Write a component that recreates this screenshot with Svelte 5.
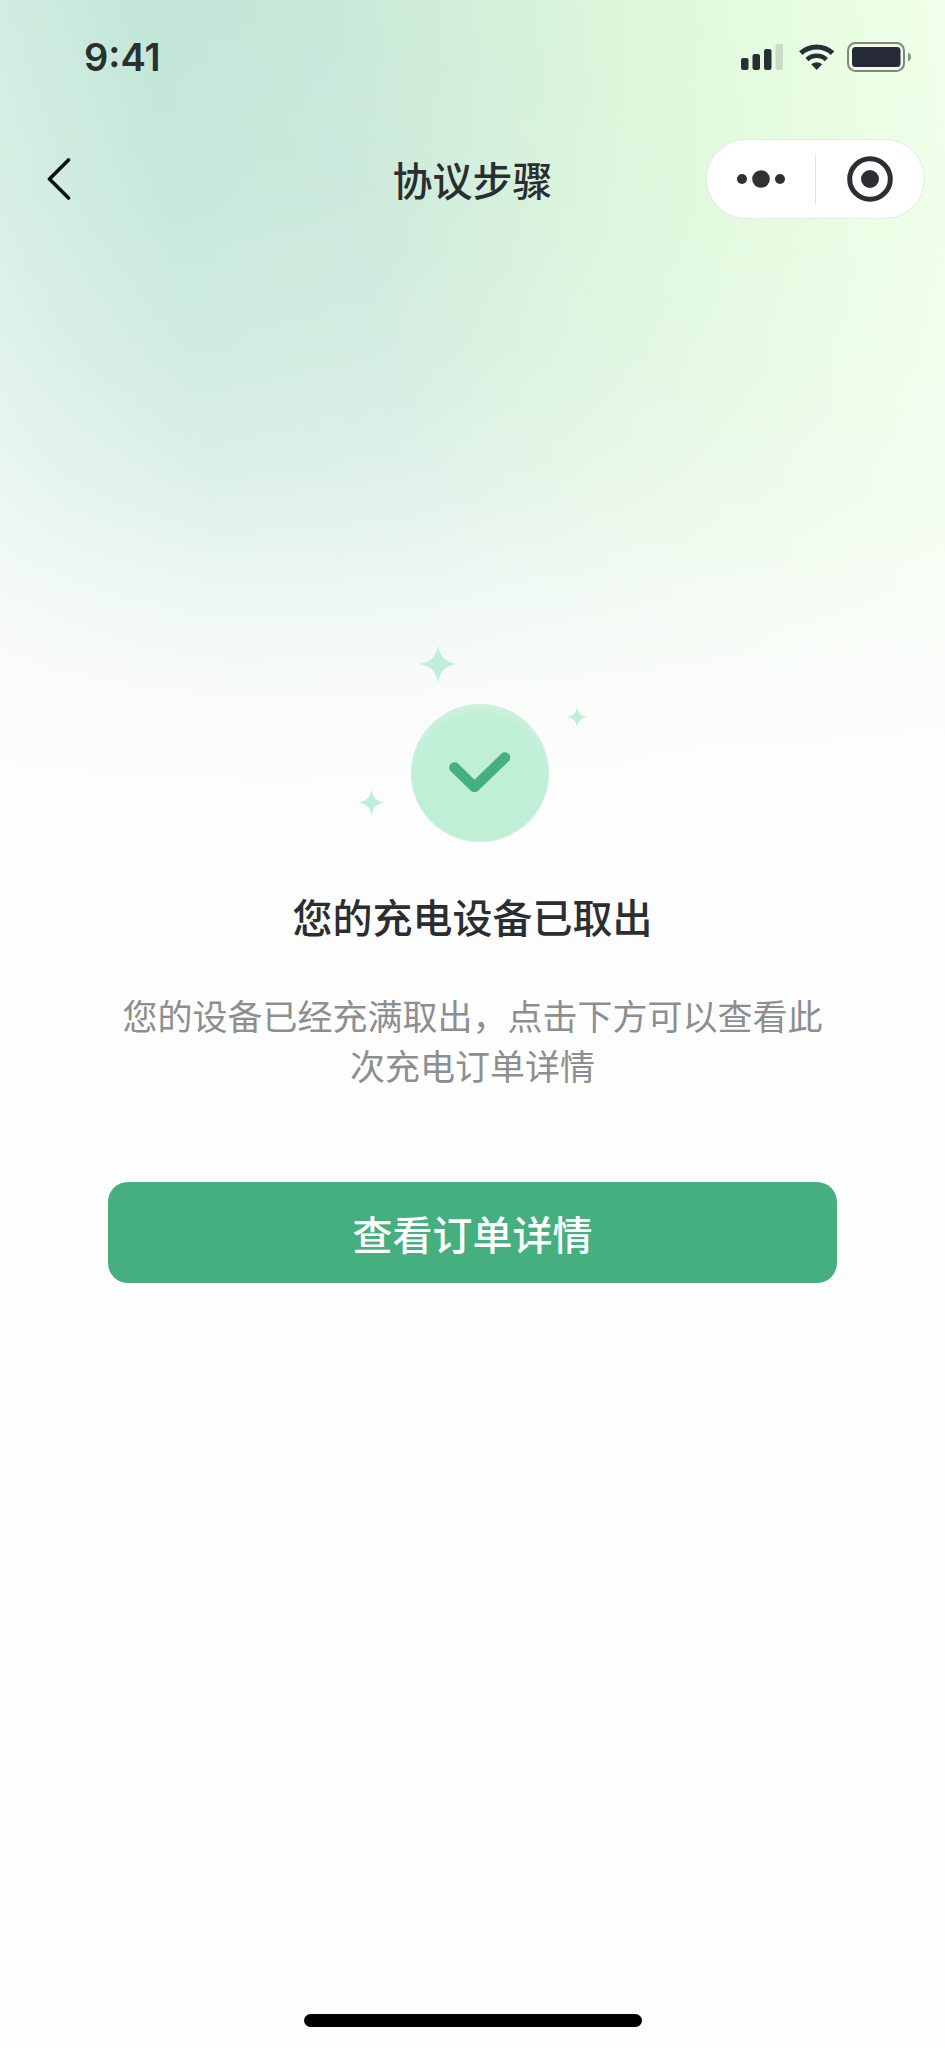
<!--
  @component ChargeComplete
  @description Result screen shown once a device has been taken out of the
    charging locker. Links on to the order details.
-->
<script>
  let {
    title = '协议步骤',
    heading = '您的充电设备已取出',
    message = '您的设备已经充满取出，点击下方可以查看此次充电订单详情',
    action = '查看订单详情',
    time = '9:41',
    onBack,
    onMenu,
    onClose,
    onViewOrder,
  } = $props();

  // Signal strength bars, shortest first; the last one is inactive
  const bars = [
    { x: 0, height: 12 },
    { x: 11.5, height: 16 },
    { x: 23, height: 21 },
    { x: 34.5, height: 26, off: true },
  ];
</script>

<div class="page">
  <div class="status-bar">
    <span class="time">{time}</span>
    <div class="status-icons" aria-hidden="true">
      <svg width="42" height="26" viewBox="0 0 42 26">
        {#each bars as bar}
          <rect
            x={bar.x}
            y={26 - bar.height}
            width="7.5"
            height={bar.height}
            rx="2.2"
            fill={bar.off ? '#c9dcc6' : '#272f35'}
          />
        {/each}
      </svg>
      <svg width="40" height="26" viewBox="0 0 40 26" fill="none" stroke="#272f35">
        <path d="M5.8 9.1a23.5 23.5 0 0 1 31.8 0" stroke-width="5" />
        <path d="M12 15.6a14.3 14.3 0 0 1 19.4 0" stroke-width="4.6" />
        <path d="M16.2 20.2a8.6 8.6 0 0 1 11 0L21.7 26z" fill="#272f35" stroke="none" />
      </svg>
      <svg width="64" height="30" viewBox="0 0 64 30">
        <rect x="1" y="1" width="56" height="28" rx="7.5" fill="#f0fbea" stroke="#7d8a7b" stroke-width="2" />
        <rect x="5" y="5" width="48.5" height="20" rx="3.5" fill="#272b37" />
        <path d="M61 10.5c2 .8 3 2.4 3 4.5s-1 3.7-3 4.5z" fill="#8a9787" />
      </svg>
    </div>
  </div>

  <header class="nav">
    <button class="back" type="button" aria-label="返回" onclick={() => onBack?.()}>
      <svg width="24" height="44" viewBox="0 0 24 44" fill="none" stroke="#0b1411" stroke-width="3.6" stroke-linecap="round" stroke-linejoin="round">
        <path d="M21.5 3L2.5 22l19 19" />
      </svg>
    </button>
    <h1 class="title">{title}</h1>
    <div class="capsule">
      <button type="button" aria-label="更多" onclick={() => onMenu?.()}>
        <svg width="48" height="18" viewBox="0 0 48 18" fill="#2f3133">
          <circle cx="5" cy="9" r="5" />
          <circle cx="24" cy="9" r="8.8" />
          <circle cx="43" cy="9" r="5" />
        </svg>
      </button>
      <span class="divider"></span>
      <button type="button" aria-label="关闭" onclick={() => onClose?.()}>
        <svg width="46" height="46" viewBox="0 0 46 46">
          <circle cx="23" cy="23" r="20.3" fill="none" stroke="#2c2e33" stroke-width="5" />
          <circle cx="23" cy="23" r="9" fill="#2c2e33" />
        </svg>
      </button>
    </div>
  </header>

  <main class="result">
    <svg class="illustration" width="230" height="197" viewBox="0 0 230 197" aria-hidden="true">
      <defs>
        <radialGradient id="disc" cx="0.5" cy="0.56" r="0.57">
          <stop offset="0.82" stop-color="#c0efd7" />
          <stop offset="1" stop-color="#cdf2df" />
        </radialGradient>
      </defs>
      <circle cx="122" cy="128" r="69" fill="url(#disc)" />
      <path d="M96.5 122.5l20 19.5 30.5-29.5" fill="none" stroke="#46af80" stroke-width="10.5" stroke-linecap="round" stroke-linejoin="round" />
      <g fill="#c0efd9">
        <path d="M80 0q2 17 19 19q-17 2-19 19q-2-17-19-19q17-2 19-19z" />
        <path d="M219 62q1.2 8.8 10 10q-8.800 1.200-10 10q-1.200-8.800-10-10q8.800-1.200 10-10z" />
        <path d="M13.5 144.500q1.500 11.500 13 13q-11.500 1.500-13 13q-1.500-11.500-13-13q11.500-1.500 13-13z" />
      </g>
    </svg>
    <h2 class="heading">{heading}</h2>
    <p class="message">{message}</p>
    <button class="primary" type="button" onclick={() => onViewOrder?.()}>{action}</button>
  </main>

  <div class="home-indicator"></div>
</div>

<style>
  :global(body) {
    margin: 0;
    background: #fdfdfd;
  }

  .page {
    box-sizing: border-box;
    min-height: 100vh;
    padding-bottom: 21px;
    display: flex;
    flex-direction: column;
    font-family: 'Noto Sans CJK SC', 'Noto Sans', sans-serif;
    color: #2b2e31;
    background:
      linear-gradient(
        to bottom,
        rgba(253, 253, 253, 0) 0,
        rgba(253, 253, 253, 0.08) 200px,
        rgba(253, 253, 253, 0.24) 360px,
        rgba(253, 253, 253, 0.44) 480px,
        rgba(253, 253, 253, 0.74) 600px,
        rgba(253, 253, 253, 0.93) 700px,
        #fdfdfd 800px
      ),
      linear-gradient(
        82deg,
        #e2f3ee 0%,
        #d2ede1 10%,
        #c3e6d8 24%,
        #c8e8d9 42%,
        #d6f2d9 60%,
        #e0f9dc 76%,
        #eafee4 90%,
        #f0ffe9 100%
      );
    background-size: 100% 800px;
    background-repeat: no-repeat;
  }

  button {
    border: none;
    padding: 0;
    background: none;
    font-family: inherit;
    color: inherit;
    cursor: pointer;
  }

  svg {
    display: block;
  }

  .status-bar {
    height: 114px;
    padding: 0 34px 0 84px;
    display: flex;
    align-items: center;
    justify-content: space-between;
  }

  .time {
    font-family: Inter, sans-serif;
    font-size: 38px;
    line-height: 44px;
    font-weight: 600;
    color: #27322f;
  }

  .status-icons {
    display: flex;
    align-items: center;
    gap: 12px;
  }

  .nav {
    height: 129px;
    padding: 0 20px;
    display: grid;
    grid-template-columns: 1fr auto 1fr;
    align-items: center;
  }

  .back {
    width: 78px;
    height: 78px;
    display: flex;
    align-items: center;
    justify-content: center;
  }

  .title {
    margin: 0;
    font-size: 40px;
    line-height: 56px;
    font-weight: 500;
  }

  .capsule {
    box-sizing: border-box;
    justify-self: end;
    width: 219px;
    height: 80px;
    border: 1px solid #e3ece0;
    border-radius: 40px;
    background: #fff;
    display: flex;
    align-items: center;
  }

  .capsule button {
    flex: 1;
    height: 100%;
    display: flex;
    align-items: center;
    justify-content: center;
  }

  .divider {
    width: 1px;
    height: 50px;
    background: #e2e2e2;
  }

  .result {
    padding: 402px 108px 48px;
    display: flex;
    flex-direction: column;
    align-items: center;
    text-align: center;
  }

  .heading {
    margin: 46px 0 0;
    font-size: 40px;
    line-height: 56px;
    font-weight: 500;
  }

  .message {
    margin: 46px 0 0;
    font-size: 35px;
    line-height: 50px;
    font-weight: 400;
    color: #8c8e90;
  }

  .primary {
    align-self: stretch;
    height: 101px;
    margin-top: 92px;
    border-radius: 20px;
    background: #46af80;
    font-size: 40px;
    line-height: 56px;
    font-weight: 500;
    color: #fff;
  }

  .home-indicator {
    width: 338px;
    height: 13px;
    margin: auto auto 0;
    border-radius: 7px;
    background: #000;
  }
</style>
